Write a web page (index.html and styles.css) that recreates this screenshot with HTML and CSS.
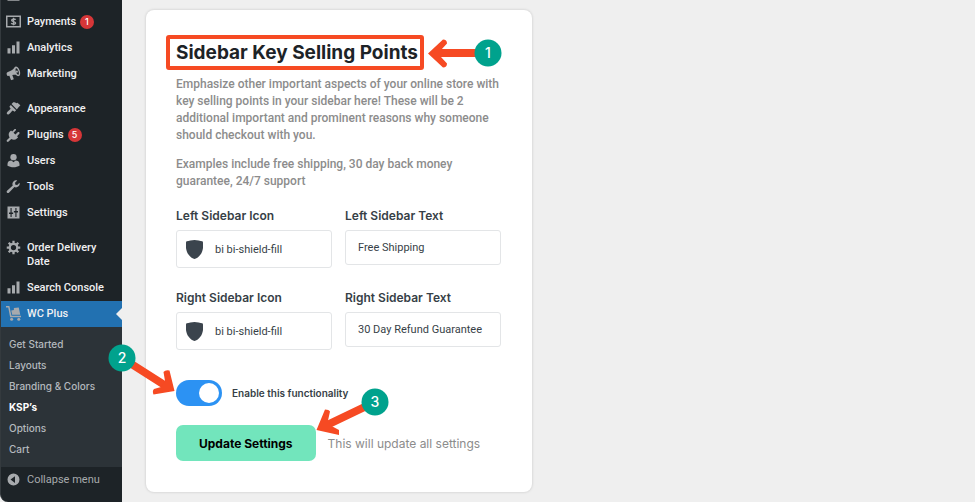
FILE: index.html
```html
<!DOCTYPE html>
<html lang="en">
<head>
    <meta charset="UTF-8">
    <meta name="viewport" content="width=device-width, initial-scale=1.0">
    <title>KSP's - WC Plus</title>
    <link rel="stylesheet" href="styles.css">
</head>
<body>
    <div class="admin">
        <nav class="sidebar">
            <ul class="menu">
                <li class="menu-clipped">
                    <a class="menu-link" href="#" aria-label="Products">
                        <svg class="menu-icon" viewBox="0 0 20 20"><path d="M2 3h16v14H2z"/></svg>
                    </a>
                </li>
                <li>
                    <a class="menu-link" href="#">
                        <svg class="menu-icon" viewBox="0 0 20 20"><path fill-rule="evenodd" d="M0 2h20v16H0zM2 4v12h16V4z"/><path d="M13 7.500C12 6.500 7.500 6.200 7.500 8.300S12.800 9.800 12.800 12 8 13.800 7 12.300M10 5v10" fill="none" stroke="currentColor" stroke-width="1.800"/></svg>
                        Payments <span class="count">1</span>
                    </a>
                </li>
                <li>
                    <a class="menu-link" href="#">
                        <svg class="menu-icon" viewBox="0 0 20 20"><path d="M2 11h4v7H2zM8 7h4v11H8zM14 2h4v16h-4z"/></svg>
                        Analytics
                    </a>
                </li>
                <li>
                    <a class="menu-link" href="#">
                        <svg class="menu-icon" viewBox="0 0 20 20"><path fill-rule="evenodd" d="M18.200 5.900c1.300 3.500.8 6.800-1 7.500-1.300.5-2.800-.2-4.200-1.700-1.400-.1-3 .1-4.600.4l1.800 4.900c.1.400 0 .7-.4.900l-2.400.9c-.4.100-.7 0-.9-.4l-2-5.300c-1.700.4-2.700.4-3.300-1.200-.7-1.900-.5-3.200 1.300-3.900C7.200 6.300 9.900 4.800 11.500 1.800c.1-.4.600-.8 1-.9 1.800-.7 4.400 1.600 5.700 5zM16.500 11.500c.9-.4.900-2.500.1-4.800s-2.400-4-3.200-3.600c-.9.300-.9 2.500-.1 4.800s2.300 3.900 3.200 3.600z"/><circle cx="14.500" cy="7.500" r="1.400"/></svg>
                        Marketing
                    </a>
                </li>
                <li class="menu-group">
                    <a class="menu-link" href="#">
                        <svg class="menu-icon" viewBox="0 0 20 20"><path d="M14.500 11.200 7.400 4.100l2.300-2.300c1.700-.4 3 .2 4 1.200l1.500-.8 4 3.600-3 3.200zM13.500 12.200l-2 2-2.600-1.500c-2 1.500-3.600 4.500-5.600 5.200-1.500.5-2.700-.9-2.200-2.200.8-2 3.700-3.500 5.100-5.400L4.500 7.500l1.900-2.300z"/></svg>
                        Appearance
                    </a>
                </li>
                <li>
                    <a class="menu-link" href="#">
                        <svg class="menu-icon" viewBox="0 0 20 20"><path d="M13.100 4.400 10 7.500 12.500 10l3.100-3.100c.4-.4 1.600-.4 2.100.1s.5 1.600.1 2.100l-3.100 3.100 1.500 1.500-1.700 1.700c-2 2-5.200 2-7.500.5L3.500 19.400c-.6.600-1.600.6-2.200 0s-.6-1.600 0-2.200L4.800 14C3.300 11.700 3 8.300 5 6.300l1.700-1.700 1.500 1.500L11.200 3c.4-.4 1.500-.4 2 .1.500.4.300.9-.1 1.300z"/></svg>
                        Plugins <span class="count">5</span>
                    </a>
                </li>
                <li>
                    <a class="menu-link" href="#">
                        <svg class="menu-icon" viewBox="0 0 20 20"><circle cx="10" cy="5.500" r="4.200"/><path d="M2 17v-2.500C2 11.500 4.500 10 7.200 10l2.800 2.400L12.800 10c2.700 0 5.200 1.500 5.200 4.500V17c-2 1.200-5 2-8 2s-6-.8-8-2z"/></svg>
                        Users
                    </a>
                </li>
                <li>
                    <a class="menu-link" href="#">
                        <svg class="menu-icon" viewBox="0 0 20 20"><path d="M16.700 9.800c-1.600 1.500-3.700 1.800-5.500.9l-7.300 7.600c-.7.700-1.800.7-2.500 0s-.7-1.800 0-2.500l7.600-7.300c-.8-1.700-.6-3.900.9-5.300 1.400-1.500 3.400-1.800 5.100-1.200L12 5l.5 2.500L15 8l3-2.900c.7 1.600.2 3.400-1.300 4.700z"/></svg>
                        Tools
                    </a>
                </li>
                <li>
                    <a class="menu-link" href="#">
                        <svg class="menu-icon" viewBox="0 0 20 20"><path fill-rule="evenodd" d="M2 2h16v16H2zM6 4v6H4v2h2v3l0 1h1.500v-4h2v-2h-2V4zM12.500 4v4h-2v2h2v6H14v-6h2V8h-2V4z"/></svg>
                        Settings
                    </a>
                </li>
                <li class="menu-group">
                    <a class="menu-link" href="#">
                        <svg class="menu-icon" viewBox="0 0 20 20"><circle cx="10" cy="10" r="5" fill="none" stroke="currentColor" stroke-width="3"/><path d="M10 1v4M10 15v4M1 10h4M15 10h4M3.600 3.600l2.900 2.900M13.500 13.500l2.900 2.900M3.600 16.400l2.900-2.900M13.500 6.500l2.900-2.900" fill="none" stroke="currentColor" stroke-width="3"/></svg>
                        Order Delivery<br>Date
                    </a>
                </li>
                <li>
                    <a class="menu-link" href="#">
                        <svg class="menu-icon" viewBox="0 0 20 20"><path d="M2 11h4v7H2zM8 7h4v11H8zM14 2h4v16h-4z"/></svg>
                        Search Console
                    </a>
                </li>
                <li>
                    <a class="menu-link current" href="#">
                        <svg class="menu-icon" viewBox="0 0 20 20"><path d="M0 0h4.500l2.800 13H20v2H5.500L3 2H0z"/><path d="M7 6l3.500-.6V2.500L17 2l2 9.500H8.200z"/><circle cx="7.500" cy="17.500" r="2"/><circle cx="17" cy="17.500" r="2"/></svg>
                        WC Plus
                    </a>
                    <ul class="submenu">
                        <li><a href="#">Get Started</a></li>
                        <li><a href="#">Layouts</a></li>
                        <li><a href="#">Branding &amp; Colors</a></li>
                        <li><a class="active" href="#">KSP’s</a></li>
                        <li><a href="#">Options</a></li>
                        <li><a href="#">Cart</a></li>
                    </ul>
                </li>
            </ul>
            <button class="menu-link collapse" type="button">
                <svg class="menu-icon" viewBox="0 0 20 20"><path fill-rule="evenodd" d="M10 2a8 8 0 1 1 0 16 8 8 0 0 1 0-16zM12 5.500 6 10l6 4.500z"/></svg>
                Collapse menu
            </button>
        </nav>

        <main class="content">
            <form class="card">
                <h1 class="card-title">Sidebar Key Selling Points</h1>
                <p class="card-text">Emphasize other important aspects of your online store with key selling points in your sidebar here! These will be 2 additional important and prominent reasons why someone should checkout with you.</p>
                <p class="card-text">Examples include free shipping, 30 day back money guarantee, 24/7 support</p>

                <div class="fields">
                    <div class="field">
                        <label for="left-icon">Left Sidebar Icon</label>
                        <div class="icon-picker">
                            <svg class="shield" viewBox="0 0 16 18"><path d="M8 0c2.500 0 5.500.7 7.300 1.300.4.100.6.400.7.800.6 5-.2 8.700-2.300 11.700C12 16.200 9.500 18 8 18s-4-1.800-5.700-4.200C.2 10.800-.6 7.100 0 2.100c.1-.4.300-.7.700-.8C2.500.7 5.500 0 8 0z"/></svg>
                            <input id="left-icon" type="text" value="bi bi-shield-fill">
                        </div>
                    </div>
                    <div class="field">
                        <label for="left-text">Left Sidebar Text</label>
                        <input class="text-input" id="left-text" type="text" value="Free Shipping">
                    </div>
                    <div class="field">
                        <label for="right-icon">Right Sidebar Icon</label>
                        <div class="icon-picker">
                            <svg class="shield" viewBox="0 0 16 18"><path d="M8 0c2.500 0 5.500.7 7.300 1.300.4.100.6.400.7.800.6 5-.2 8.700-2.300 11.700C12 16.200 9.500 18 8 18s-4-1.800-5.700-4.200C.2 10.800-.6 7.100 0 2.100c.1-.4.300-.7.700-.8C2.500.7 5.500 0 8 0z"/></svg>
                            <input id="right-icon" type="text" value="bi bi-shield-fill">
                        </div>
                    </div>
                    <div class="field">
                        <label for="right-text">Right Sidebar Text</label>
                        <input class="text-input" id="right-text" type="text" value="30 Day Refund Guarantee">
                    </div>
                </div>

                <div class="toggle-row">
                    <input class="toggle" id="enable" type="checkbox" checked>
                    <label for="enable">Enable this functionality</label>
                </div>

                <div class="actions">
                    <button class="update-button" type="button">Update Settings</button>
                    <span class="hint">This will update all settings</span>
                </div>
            </form>
        </main>

        <!-- numbered steps drawn over the page -->
        <svg class="steps" viewBox="0 0 540 502">
            <rect class="step-frame" x="168" y="37" width="254" height="31" rx="1"/>
            <path class="step-arrow" d="M478 53H438M122 358l44 28M375 402l-48 23"/>
            <path class="step-head" d="M428 53.500 443 39.500q4 0 4 4l-6 6.500v7l6 6.500q0 4-4 4zM174.500 391l-5-20.500q-4-1-6 1.500l1.500 9-4 6-7 2q-2 2-.5 5.500zM316.500 430l8.500-20.500q4 0 5 2l-2 9 3.500 5.500 7.500 4v5z"/>
            <circle class="step-dot" cx="488" cy="53" r="13.500"/>
            <circle class="step-dot" cx="122" cy="358" r="13.500"/>
            <circle class="step-dot" cx="375" cy="402" r="13.500"/>
            <text class="step-number" x="488" y="58">1</text>
            <text class="step-number" x="122" y="363">2</text>
            <text class="step-number" x="375" y="407">3</text>
        </svg>
    </div>
</body>
</html>
```
FILE: styles.css
```css
:root {
    --menu-dark: #1d2327;
    --menu-sub: #2c3338;
    --menu-blue: #2271b1;
    --page: #efefef;
    --ink: #373f47;
    --step-red: #f64a23;
    --step-green: #00a28d;
}

* {
    margin: 0;
    padding: 0;
    box-sizing: border-box;
    font-family: Inter, sans-serif;
}

body {
    background: var(--page);
}

ul {
    list-style: none;
}

.admin {
    position: relative;
    display: flex;
    min-height: 100vh;
    overflow: hidden;
}

/* Admin menu */
.sidebar {
    flex: 0 0 122px;
    background: var(--menu-dark);
    border-left: 1px solid #343a3e;
    border-bottom-left-radius: 8px;
}

.menu-clipped {
    margin-top: -17px;
}

.menu-group {
    margin-top: 9px;
}

.menu-link {
    position: relative;
    display: block;
    width: 100%;
    min-height: 26px;
    padding: 6px 0 6px 26px;
    color: #f0f0f1;
    font-family: Roboto, sans-serif;
    font-size: 11px;
    font-weight: 500;
    line-height: 14px;
    text-align: left;
    text-decoration: none;
    white-space: nowrap;
}

.menu-icon {
    position: absolute;
    top: 5px;
    left: 5px;
    width: 15px;
    height: 15px;
    color: #a7aaad;
    fill: currentColor;
}

.count {
    display: inline-block;
    width: 14px;
    margin-left: 1px;
    border-radius: 7px;
    background: #d63638;
    color: #fff;
    font-size: 9px;
    line-height: 14px;
    text-align: center;
    vertical-align: top;
}

.current {
    background: var(--menu-blue);
}

.current::after {
    content: "";
    position: absolute;
    top: 7px;
    right: 0;
    border: 6px solid transparent;
    border-left-width: 0;
    border-right-color: var(--page);
}

.submenu {
    padding: 7px 0 7px 8px;
    background: var(--menu-sub);
}

.submenu a {
    display: block;
    color: #b4b9be;
    font-size: 10px;
    font-weight: 500;
    line-height: 21px;
    text-decoration: none;
}

.submenu .active {
    color: #fff;
    font-weight: 700;
}

.collapse {
    border: 0;
    background: none;
    color: #a7aaad;
    font-weight: 400;
}

/* Settings card */
.content {
    flex: 1;
    padding: 10px 24px;
}

.card {
    max-width: 386px;
    padding: 31px 31px 31px 30px;
    border-radius: 8px;
    background: #fff;
    box-shadow: 0 0 3px rgba(0, 0, 0, 0.18);
}

.card-title {
    margin-bottom: 11px;
    color: #1d2327;
    font-size: 19px;
    font-weight: 700;
    line-height: 24px;
}

.card-text {
    margin-bottom: 12px;
    color: #8c8c8c;
    font-family: Roboto, sans-serif;
    font-size: 12px;
    font-weight: 500;
    line-height: 17px;
}

.fields {
    display: grid;
    grid-template-columns: repeat(2, minmax(0, 1fr));
    gap: 22px 13px;
    padding-top: 6px;
}

.field label {
    display: block;
    margin-bottom: 6px;
    color: var(--ink);
    font-size: 12px;
    font-weight: 600;
    line-height: 16px;
}

.icon-picker,
.text-input {
    width: 100%;
    border: 1px solid #e3e5e7;
    border-radius: 3px;
    background: #fff;
}

.icon-picker {
    display: flex;
    align-items: center;
    gap: 12px;
    height: 38px;
    padding-left: 9px;
}

.icon-picker input {
    flex: 1;
    min-width: 0;
    border: 0;
    background: none;
}

.icon-picker input,
.text-input {
    color: var(--ink);
    font-family: Roboto, sans-serif;
    font-size: 11px;
    outline: none;
}

.text-input {
    height: 35px;
    padding: 0 12px;
}

.shield {
    width: 17px;
    height: 19px;
    fill: #3b444d;
}

.toggle-row {
    display: flex;
    align-items: center;
    gap: 10px;
    margin-top: 30px;
    color: var(--ink);
    font-size: 10px;
    font-weight: 600;
}

.toggle {
    width: 46px;
    height: 26px;
    padding: 3px;
    border-radius: 13px;
    background: #2c92f3;
    appearance: none;
}

.toggle::before {
    content: "";
    display: block;
    width: 20px;
    height: 20px;
    border-radius: 50%;
    background: #fff;
}

.toggle:checked::before {
    margin-left: auto;
}

.actions {
    display: flex;
    align-items: center;
    gap: 12px;
    margin-top: 19px;
}

.update-button {
    height: 36px;
    padding: 0 23px;
    border: 0;
    border-radius: 7px;
    background: #72e5bc;
    color: #000;
    font-size: 12px;
    font-weight: 700;
}

.hint {
    color: #8c8c8c;
    font-size: 12px;
}

/* Numbered steps */
.steps {
    position: absolute;
    top: 0;
    left: 0;
    width: 540px;
    height: 502px;
    pointer-events: none;
}

.step-frame {
    fill: none;
    stroke: var(--step-red);
    stroke-width: 4;
}

.step-arrow {
    fill: none;
    stroke: var(--step-red);
    stroke-width: 8;
}

.step-head {
    fill: var(--step-red);
}

.step-dot {
    fill: var(--step-green);
}

.step-number {
    fill: #fff;
    font-size: 14px;
    font-weight: 500;
    text-anchor: middle;
}
```
